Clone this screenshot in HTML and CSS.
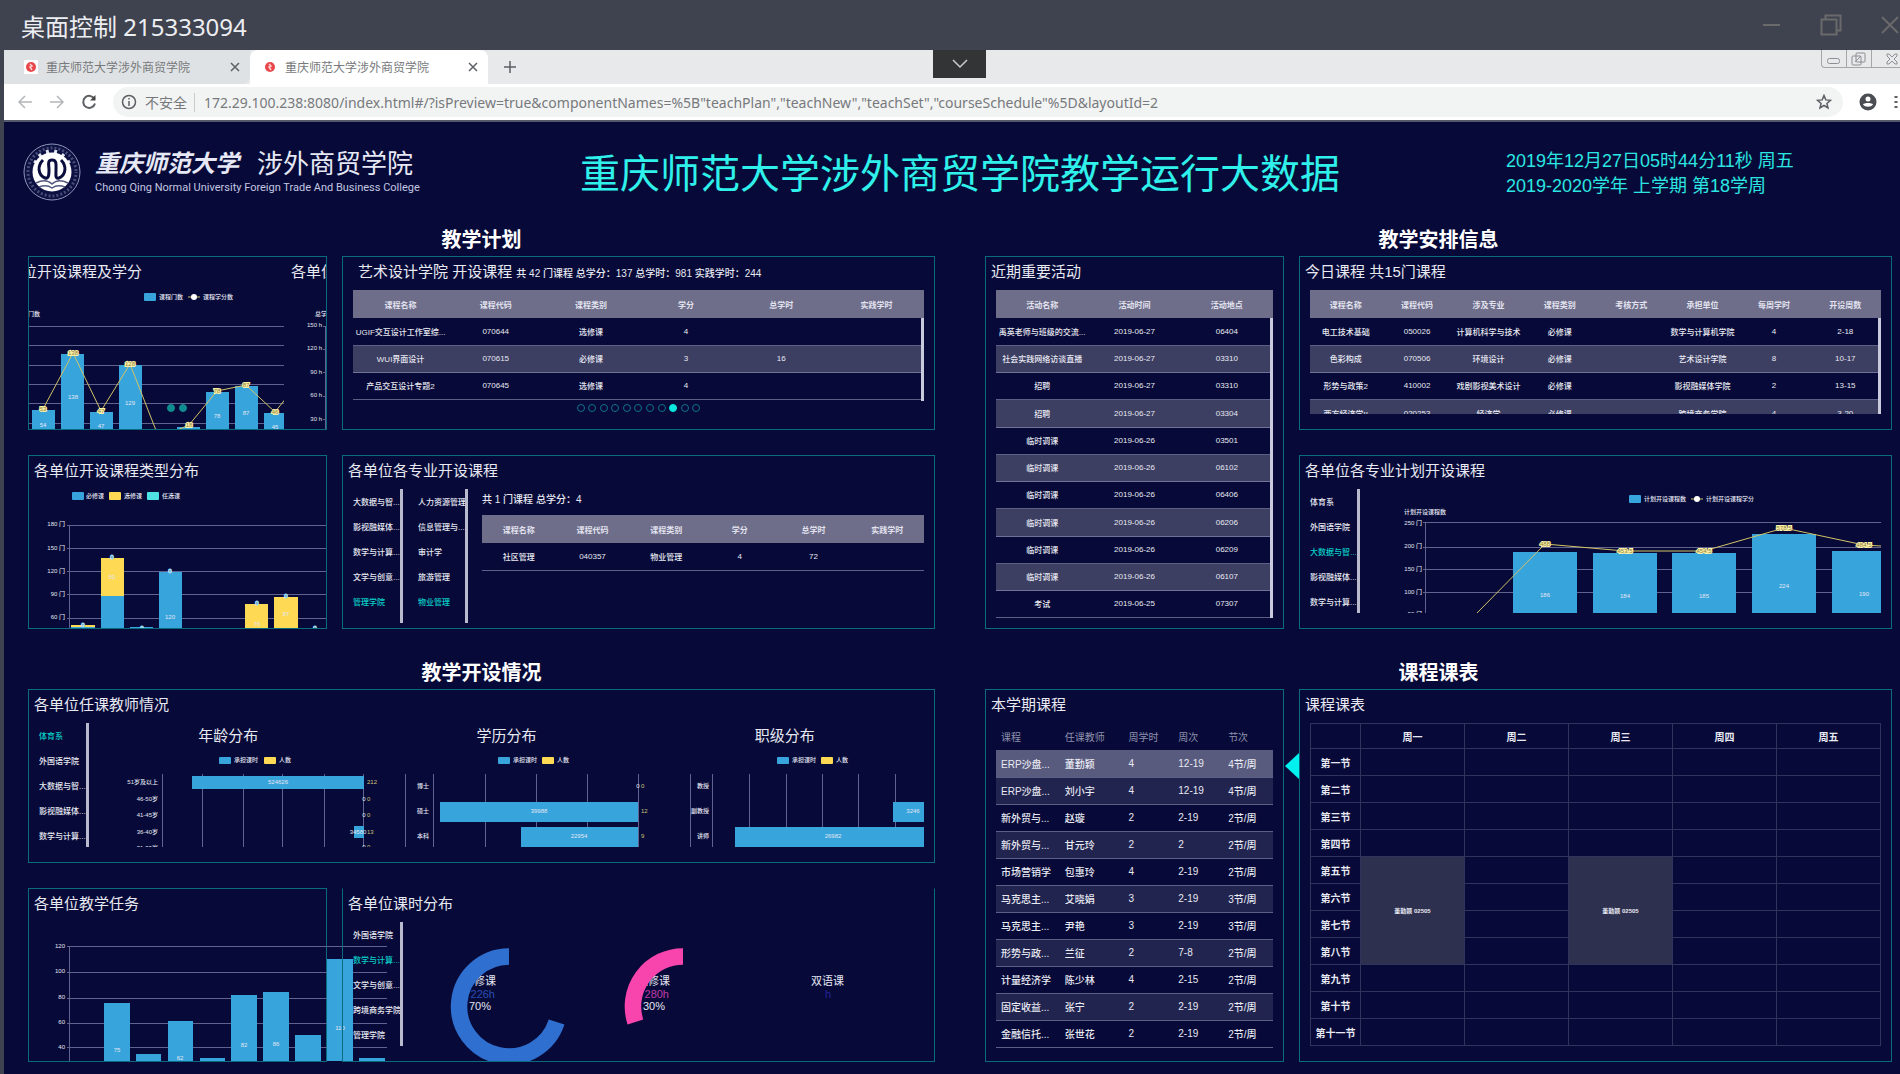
FILE: index.html
```html
<!DOCTYPE html>
<html lang="zh-CN">
<head>
<meta charset="utf-8">
<title>重庆师范大学涉外商贸学院</title>
<link rel="stylesheet" href="styles.css">
</head>
<body>
<header class="remote-bar">
  <span>桌面控制 215333094</span>
  <div class="remote-controls">
    <button type="button" aria-label="最小化"><svg width="20" height="20" viewBox="0 0 20 20"><path d="M1 10h17"/></svg></button>
    <button type="button" aria-label="还原"><svg width="22" height="22" viewBox="0 0 22 22"><path d="M1.500 5.500h15v15h-15zM5.500 5.500v-4h15v15h-4"/></svg></button>
    <button type="button" aria-label="关闭"><svg width="20" height="20" viewBox="0 0 20 20"><path d="M2 2l16 16M18 2L2 18"/></svg></button>
  </div>
</header>

<div class="browser">
  <div class="tabs">
    <div class="tab">
      <svg class="favicon" width="14" height="14" viewBox="0 0 14 14"><rect width="14" height="14" fill="#fff"/><circle cx="7" cy="7" r="5" fill="#e8474a"/><path d="M6 4l2 2-2 1 2 3" stroke="#ffd0d0" fill="none"/></svg>
      <span>重庆师范大学涉外商贸学院</span>
      <button type="button" aria-label="关闭标签页"><svg width="10" height="10" viewBox="0 0 10 10"><path d="M1 1l8 8M9 1L1 9"/></svg></button>
    </div>
    <div class="tab tab-active">
      <svg class="favicon" width="14" height="14" viewBox="0 0 14 14"><circle cx="7" cy="7" r="5" fill="#e8474a"/><path d="M6 4l2 2-2 1 2 3" stroke="#ffd0d0" fill="none"/></svg>
      <span>重庆师范大学涉外商贸学院</span>
      <button type="button" aria-label="关闭标签页"><svg width="10" height="10" viewBox="0 0 10 10"><path d="M1 1l8 8M9 1L1 9"/></svg></button>
    </div>
    <button type="button" class="new-tab" aria-label="新标签页"><svg width="14" height="14" viewBox="0 0 14 14"><path d="M7 1v12M1 7h12"/></svg></button>
    <button type="button" class="drop-handle" aria-label="展开"><svg width="18" height="10" viewBox="0 0 18 10"><path d="M2 1l7 7 7-7"/></svg></button>
    <div class="mini-controls">
      <button type="button" aria-label="最小化窗口"><svg width="24" height="16" viewBox="0 0 24 16"><rect x="5.500" y="7.500" width="12" height="5" rx="2"/></svg></button>
      <button type="button" aria-label="还原窗口"><svg width="24" height="16" viewBox="0 0 24 16"><rect x="9" y="2" width="9" height="9" rx="1"/><rect x="5" y="5" width="9" height="9" rx="1"/><path d="M8 11l6-6"/></svg></button>
      <button type="button" aria-label="关闭窗口"><svg width="28" height="16" viewBox="0 0 28 16"><path d="M15 3l2 0 3 3 3-3h2v2l-3 3 3 3v2h-2l-3-3-3 3h-2v-2l3-3-3-3z"/></svg></button>
    </div>
  </div>
  <div class="toolbar">
    <button type="button" class="nav-off" aria-label="后退"><svg width="16" height="16" viewBox="0 0 16 16"><path d="M15 8H2M8 2L2 8l6 6"/></svg></button>
    <button type="button" class="nav-off" aria-label="前进"><svg width="16" height="16" viewBox="0 0 16 16"><path d="M1 8h13M8 2l6 6-6 6"/></svg></button>
    <button type="button" aria-label="刷新"><svg width="16" height="16" viewBox="0 0 16 16"><path d="M13.500 5A6 6 0 1 0 14 9.500" stroke-width="2"/><path d="M14.500 1v5.500H9z" fill="#444" stroke="none"/></svg></button>
    <div class="address">
      <svg width="16" height="16" viewBox="0 0 16 16"><circle cx="8" cy="8" r="6.500"/><path d="M8 7v5M8 4v1.500"/></svg>
      <label for="url">不安全</label>
      <input id="url" type="text" value='172.29.100.238:8080/index.html#/?isPreview=true&amp;componentNames=%5B"teachPlan","teachNew","teachSet","courseSchedule"%5D&amp;layoutId=2'>
      <button type="button" aria-label="收藏"><svg width="16" height="16" viewBox="0 0 16 16"><path d="M8 1.500l1.800 4.400 4.700.4-3.600 3.100 1.100 4.600L8 11.500 4 14l1.100-4.600L1.500 6.300l4.700-.4z"/></svg></button>
    </div>
    <button type="button" aria-label="用户"><svg width="18" height="18" viewBox="0 0 18 18"><circle cx="9" cy="9" r="8.500" fill="#4a4d51" stroke="none"/><circle cx="9" cy="6" r="2.500" fill="#fff" stroke="none"/><path d="M4 11.500c1-2 9-2 10 0-2 3-8 3-10 0z" fill="#fff" stroke="none"/></svg></button>
    <button type="button" aria-label="菜单"><svg width="6" height="16" viewBox="0 0 6 16"><path d="M3 2v2M3 7v2M3 12v2" stroke-width="3"/></svg></button>
  </div>
</div>

<div class="dashboard">
  <header class="top">
    <div class="brand">
      <svg width="58" height="58" viewBox="0 0 58 58">
        <circle cx="29" cy="29" r="28" fill="#0d1142" stroke="#8f95b8" stroke-width="1"/>
        <path d="M11 18l3 2M16 11l3 4M24 7l1 4M33 7l-1 4M41 11l-3 4M47 18l-3 2" fill="none" stroke="#e2e4f2" stroke-width="3"/>
        <circle cx="29" cy="29" r="24" fill="none" stroke="#8f95b8" stroke-width="3" stroke-dasharray="2 2" stroke-dashoffset="1" pathLength="150" opacity=".45"/>
        <circle cx="29" cy="29" r="19.500" fill="#fff"/>
        <path d="M20 17c-6 6-5 15 2 18 4 1 4-4 4-8 0-5-2-10 3-10s4 5 4 10c0 5-1 9 3 8 7-3 8-12 2-18" fill="none" stroke="#0a0d3d" stroke-width="3"/>
        <path d="M13 40c6-3 12-3 16 1 4-4 10-4 16-1M16 44c5-2 9-2 13 1 4-3 8-3 13-1" fill="none" stroke="#53597f" stroke-width="1.500"/>
      </svg>
      <div>
        <div class="brand-cn"><span class="brush">重庆师范大学</span><span>涉外商贸学院</span></div>
        <div class="brand-en">Chong Qing Normal University Foreign Trade And Business College</div>
      </div>
    </div>
    <h1>重庆师范大学涉外商贸学院教学运行大数据</h1>
    <div class="clock">
      <div>2019年12月27日05时44分11秒 周五</div>
      <div>2019-2020学年 上学期 第18学周</div>
    </div>
  </header>

  <main>
    <section>
      <h2>教学计划</h2>
      <div class="panels">
        <article class="panel clip">
          <div class="track">
            <div class="slide">
              <h3>各单位开设课程及学分</h3>
              <svg class="chart" viewBox="-13 287 297 142" preserveAspectRatio="xMinYMin">
                <g class="bar"><rect x="144" y="293" width="12" height="8" rx="1"/></g>
                <g class="s6"><text x="159" y="297">课程门数</text><text x="203" y="297">课程学分数</text><text x="28" y="314">门数</text></g>
                <path class="line" d="M188 297h12"/><circle cx="194" cy="297" r="3" fill="#fff"/>
                <path class="grid" d="M0 326.500h288M0 345.500h288M0 365.500h288M0 384.500h288M0 403.500h288M0 423.500h288"/>
                <g class="bar"><rect x="32" y="410" width="23" height="20"/><rect x="61" y="354" width="23" height="76"/><rect x="90" y="412" width="23" height="20"/><rect x="119" y="365" width="23" height="70"/><rect x="177" y="427" width="23" height="9"/><rect x="206" y="392" width="23" height="40"/><rect x="235" y="386" width="23" height="50"/><rect x="264" y="413" width="23" height="20"/></g>
                <path class="line" d="M43 409L73 353 101 411 130 364 159 438 189 425 217 391 246 385 275 412 287 397"/>
                <g class="s6 mid"><text x="43" y="425">54</text><text x="73" y="397">138</text><text x="101" y="426">47</text><text x="130" y="403">129</text><text x="217" y="416">78</text><text x="246" y="413">87</text><text x="275" y="427">45</text></g>
                <g class="s6 mid tag"><text x="43" y="409">53</text><text x="73" y="353">138</text><text x="101" y="411">47</text><text x="130" y="364">128</text><text x="189" y="425">18</text><text x="217" y="391">78</text><text x="246" y="385">87</text><text x="275" y="412">46</text></g>
              </svg>
            </div>
            <div class="slide">
              <h3>各单位学时分布</h3>
              <svg class="chart" viewBox="286 287 297 142" preserveAspectRatio="xMinYMin">
                <text class="s6" x="315" y="314">总学时</text>
                <g class="s6 end"><text x="322" y="325">150 h</text><text x="322" y="348">120 h</text><text x="322" y="372">90 h</text><text x="322" y="395">60 h</text><text x="322" y="419">30 h</text></g>
                <path class="grid" d="M325.500 326v110M323 326.500h260M323 349.500h260M323 372.500h260M323 396.500h260M323 419.500h260"/>
              </svg>
            </div>
          </div>
          <div class="dots dots-pair"><button type="button" aria-label="第1页"></button><button type="button" aria-label="第2页"></button></div>
        </article>

        <article class="panel">
          <h3 class="h-indent">艺术设计学院 开设课程 <small>共 42 门课程 总学分：137 总学时：981 实践学时：244</small></h3>
          <div class="scroll h111">
            <table class="data">
              <thead><tr><th>课程名称</th><th>课程代码</th><th>课程类别</th><th>学分</th><th>总学时</th><th>实践学时</th></tr></thead>
              <tbody>
                <tr><td>UGIF交互设计工作室综...</td><td>070644</td><td>选修课</td><td>4</td><td></td><td></td></tr>
                <tr><td>WUI界面设计</td><td>070615</td><td>必修课</td><td>3</td><td>16</td><td></td></tr>
                <tr><td>产品交互设计专题2</td><td>070645</td><td>选修课</td><td>4</td><td></td><td></td></tr>
              </tbody>
            </table>
            <i class="bar-y below-head"></i>
          </div>
          <div class="dots dots-row">
            <button type="button" aria-label="第1页"></button><button type="button" aria-label="第2页"></button><button type="button" aria-label="第3页"></button><button type="button" aria-label="第4页"></button><button type="button" aria-label="第5页"></button><button type="button" aria-label="第6页"></button><button type="button" aria-label="第7页"></button><button type="button" aria-label="第8页"></button><button type="button" class="on" aria-label="第9页"></button><button type="button" aria-label="第10页"></button><button type="button" aria-label="第11页"></button>
          </div>
        </article>

        <article class="panel">
          <h3>各单位开设课程类型分布</h3>
          <svg class="chart" viewBox="29 486 297 142" preserveAspectRatio="xMinYMin">
            <rect x="72" y="492" width="12" height="8" rx="1" fill="#38a4dc"/><rect x="109" y="492" width="12" height="8" rx="1" fill="#fed953"/><rect x="147" y="492" width="12" height="8" rx="1" fill="#4fe0e4"/>
            <g class="s6"><text x="86" y="496">必修课</text><text x="124" y="496">选修课</text><text x="162" y="496">任选课</text></g>
            <g class="s6 end"><text x="65" y="524">180 门</text><text x="65" y="548">150 门</text><text x="65" y="571">120 门</text><text x="65" y="594">90 门</text><text x="65" y="617">60 门</text></g>
            <path class="grid" d="M69.500 525v104M67 525.500h260M67 548.500h260M67 571.500h260M67 594.500h260M67 618.500h260"/>
            <g class="bar"><rect x="101" y="596" width="23" height="33"/><rect x="159" y="572" width="23" height="57"/><rect x="71" y="627" width="24" height="3"/><rect x="130" y="627" width="23" height="3"/></g>
            <g fill="#fed953"><rect x="71" y="625" width="24" height="2"/><rect x="101" y="558" width="23" height="38"/><rect x="245" y="604" width="23" height="25"/><rect x="274" y="597" width="24" height="32"/></g>
            <g class="s6 mid glow"><text x="83" y="625">0</text><text x="112" y="557">0</text><text x="142" y="628">0</text><text x="170" y="571">0</text><text x="257" y="603">0</text><text x="286" y="596">0</text><text x="315" y="628">0</text></g>
            <g class="s6 mid"><text x="112" y="577">50</text><text x="170" y="617">120</text><text x="257" y="624">76</text><text x="286" y="614">87</text></g>
          </svg>
        </article>

        <article class="panel">
          <h3>各单位各专业开设课程</h3>
          <div class="split">
            <ul class="list list-tall">
              <li><button type="button">大数据与智...</button></li><li><button type="button">影视融媒体...</button></li><li><button type="button">数学与计算...</button></li><li><button type="button">文学与创意...</button></li><li><button type="button" class="on">管理学院</button></li>
            </ul>
            <ul class="list list-tall list-next">
              <li><button type="button">人力资源管理</button></li><li><button type="button">信息管理与...</button></li><li><button type="button">审计学</button></li><li><button type="button">旅游管理</button></li><li><button type="button" class="on">物业管理</button></li>
            </ul>
            <div class="grow">
              <p>共 1 门课程 总学分：4</p>
              <table class="data">
                <thead><tr><th>课程名称</th><th>课程代码</th><th>课程类别</th><th>学分</th><th>总学时</th><th>实践学时</th></tr></thead>
                <tbody><tr><td>社区管理</td><td>040357</td><td>物业管理</td><td>4</td><td>72</td><td></td></tr></tbody>
              </table>
            </div>
          </div>
        </article>
      </div>
    </section>

    <section>
      <h2>教学安排信息</h2>
      <div class="panels">
        <article class="panel tall">
          <h3>近期重要活动</h3>
          <div class="scroll h328">
            <table class="data">
              <thead><tr><th>活动名称</th><th>活动时间</th><th>活动地点</th></tr></thead>
              <tbody>
                <tr><td>禹英老师与班级的交流...</td><td>2019-06-27</td><td>06404</td></tr>
                <tr><td>社会实践网络访谈直播</td><td>2019-06-27</td><td>03310</td></tr>
                <tr><td>招聘</td><td>2019-06-27</td><td>03310</td></tr>
                <tr><td>招聘</td><td>2019-06-27</td><td>03304</td></tr>
                <tr><td>临时调课</td><td>2019-06-26</td><td>03501</td></tr>
                <tr><td>临时调课</td><td>2019-06-26</td><td>06102</td></tr>
                <tr><td>临时调课</td><td>2019-06-26</td><td>06406</td></tr>
                <tr><td>临时调课</td><td>2019-06-26</td><td>06206</td></tr>
                <tr><td>临时调课</td><td>2019-06-26</td><td>06209</td></tr>
                <tr><td>临时调课</td><td>2019-06-26</td><td>06107</td></tr>
                <tr><td>考试</td><td>2019-06-25</td><td>07307</td></tr>
              </tbody>
            </table>
            <i class="bar-y below-head"></i>
          </div>
        </article>

        <article class="panel">
          <h3>今日课程 共15门课程</h3>
          <div class="scroll h124">
            <table class="data">
              <thead><tr><th>课程名称</th><th>课程代码</th><th>涉及专业</th><th>课程类别</th><th>考核方式</th><th>承担单位</th><th>每周学时</th><th>开设周数</th></tr></thead>
              <tbody>
                <tr><td>电工技术基础</td><td>050026</td><td>计算机科学与技术</td><td>必修课</td><td></td><td>数学与计算机学院</td><td>4</td><td>2-18</td></tr>
                <tr><td>色彩构成</td><td>070506</td><td>环境设计</td><td>必修课</td><td></td><td>艺术设计学院</td><td>8</td><td>10-17</td></tr>
                <tr><td>形势与政策2</td><td>410002</td><td>戏剧影视美术设计</td><td>必修课</td><td></td><td>影视融媒体学院</td><td>2</td><td>13-15</td></tr>
                <tr><td>西方经济学II</td><td>020253</td><td>经济学</td><td>必修课</td><td></td><td>跨境商务学院</td><td>4</td><td>3-20</td></tr>
              </tbody>
            </table>
            <i class="bar-y below-head"></i>
          </div>
        </article>

        <article class="panel">
          <h3>各单位各专业计划开设课程</h3>
          <div class="split">
            <ul class="list">
              <li><button type="button">体育系</button></li><li><button type="button">外国语学院</button></li><li><button type="button" class="on">大数据与智...</button></li><li><button type="button">影视融媒体...</button></li><li><button type="button">数学与计算...</button></li>
            </ul>
            <svg class="chart-side h124" viewBox="1360 489 521 124" preserveAspectRatio="xMinYMin">
              <rect x="1629" y="495" width="12" height="8" rx="1" fill="#38a4dc"/>
              <path class="line" d="M1691 499h12"/><circle cx="1697" cy="499" r="3" fill="#fff"/>
              <g class="s6"><text x="1644" y="499">计划开设课程数</text><text x="1706" y="499">计划开设课程学分</text><text x="1404" y="512">计划开设课程数</text></g>
              <g class="s6 end"><text x="1422" y="523">250 门</text><text x="1422" y="546">200 门</text><text x="1422" y="569">150 门</text><text x="1422" y="592">100 门</text><text x="1422" y="614">50 门</text></g>
              <path class="grid" d="M1425.500 522v92M1423 522.500h458M1423 547.500h458M1423 569.500h458M1423 592.500h458"/>
              <g class="bar"><rect x="1513" y="552" width="64" height="62"/><rect x="1593" y="553" width="64" height="61"/><rect x="1672" y="553" width="64" height="61"/><rect x="1752" y="534" width="64" height="80"/><rect x="1832" y="551" width="49" height="63"/></g>
              <path class="line" d="M1476 614L1545 544 1625 551 1704 551 1784 528 1864 545 1881 546"/>
              <g class="s6 mid"><text x="1545" y="595">186</text><text x="1625" y="596">184</text><text x="1704" y="596">185</text><text x="1784" y="586">224</text><text x="1864" y="594">190</text></g>
              <g class="s6 mid tag"><text x="1545" y="544">488</text><text x="1625" y="551">453.5</text><text x="1704" y="551">454.5</text><text x="1784" y="528">578.5</text><text x="1864" y="545">484.5</text></g>
            </svg>
          </div>
        </article>
      </div>
    </section>

    <section>
      <h2>教学开设情况</h2>
      <div class="panels">
        <article class="panel wide">
          <h3>各单位任课教师情况</h3>
          <div class="split">
            <ul class="list">
              <li><button type="button" class="on">体育系</button></li><li><button type="button">外国语学院</button></li><li><button type="button">大数据与智...</button></li><li><button type="button">影视融媒体...</button></li><li><button type="button">数学与计算...</button></li>
            </ul>
            <div class="grow-flush">
              <div class="trio"><h4>年龄分布</h4><h4>学历分布</h4><h4>职级分布</h4></div>
              <svg class="chart-side h99" viewBox="89 748 835 99" preserveAspectRatio="xMinYMin">
                <g class="bar"><rect x="219" y="757" width="12" height="7" rx="1"/><rect x="498" y="757" width="12" height="7" rx="1"/><rect x="777" y="757" width="12" height="7" rx="1"/></g>
                <g fill="#fed953"><rect x="264" y="757" width="12" height="7" rx="1"/><rect x="542" y="757" width="12" height="7" rx="1"/><rect x="821" y="757" width="12" height="7" rx="1"/></g>
                <g class="s6"><text x="234" y="760">承担课时</text><text x="279" y="760">人数</text><text x="513" y="760">承担课时</text><text x="557" y="760">人数</text><text x="792" y="760">承担课时</text><text x="836" y="760">人数</text></g>
                <path class="grid" d="M162.500 774v73M202.500 774v73M243.500 774v73M282.500 774v73M324.500 774v73M363.500 774v73M405.500 774v73M433.500 774v73M485.500 774v73M536.500 774v73M587.500 774v73M638.500 774v73M690.500 774v73M712.500 774v73M749.500 774v73M786.500 774v73M822.500 774v73M858.500 774v73M895.500 774v73"/>
                <g class="bar"><rect x="192" y="776" width="172" height="13"/><rect x="354" y="826" width="10" height="12"/><rect x="440" y="802" width="198" height="20"/><rect x="521" y="827" width="117" height="20"/><rect x="893" y="802" width="32" height="20"/><rect x="735" y="827" width="190" height="20"/></g>
                <g class="s6 end"><text x="158" y="782">51岁及以上</text><text x="158" y="799">46-50岁</text><text x="158" y="815">41-45岁</text><text x="158" y="832">36-40岁</text><text x="158" y="848">31-35岁</text></g>
                <g class="s6 end"><text x="429" y="786">博士</text><text x="429" y="811">硕士</text><text x="429" y="836">本科</text><text x="709" y="786">教授</text><text x="709" y="811">副教授</text><text x="709" y="836">讲师</text></g>
                <g class="s6 mid"><text x="278" y="782">524626</text><text x="358" y="832">34580</text><text x="539" y="811">39988</text><text x="579" y="836">22954</text><text x="913" y="811">3246</text><text x="833" y="836">26982</text></g>
                <g class="s6 mid"><text x="364" y="799">0</text><text x="364" y="815">0</text><text x="364" y="847">0</text><text x="638" y="786">0</text></g>
                <g class="s6 gold"><text x="367" y="782">212</text><text x="367" y="799">0</text><text x="367" y="815">0</text><text x="367" y="832">13</text><text x="367" y="847">0</text><text x="641" y="786">0</text><text x="641" y="811">12</text><text x="641" y="836">9</text></g>
              </svg>
            </div>
          </div>
        </article>

        <article class="panel">
          <h3>各单位教学任务</h3>
          <svg class="chart chart-over" viewBox="29 919 360 142" preserveAspectRatio="xMinYMin">
            <g class="s6 end"><text x="65" y="946">120</text><text x="65" y="971">100</text><text x="65" y="997">80</text><text x="65" y="1022">60</text><text x="65" y="1047">40</text></g>
            <path class="grid" d="M69.500 946v116M67 946.500h320M67 972.500h320M67 998.500h320M67 1023.500h320M67 1047.500h320"/>
            <g class="bar"><rect x="104" y="1003" width="26" height="60"/><rect x="136" y="1054" width="25" height="9"/><rect x="168" y="1021" width="25" height="41"/><rect x="200" y="1058" width="25" height="4"/><rect x="231" y="995" width="26" height="67"/><rect x="263" y="992" width="26" height="70"/><rect x="295" y="1035" width="26" height="30"/><rect x="327" y="959" width="26" height="103"/><rect x="359" y="1058" width="26" height="4"/></g>
            <g class="s6 mid"><text x="117" y="1050">75</text><text x="180" y="1058">62</text><text x="244" y="1045">82</text><text x="276" y="1044">86</text><text x="340" y="1028">110</text></g>
          </svg>
        </article>

        <article class="panel open-top">
          <h3>各单位课时分布</h3>
          <div class="split">
            <ul class="list">
              <li><button type="button">外国语学院</button></li><li><button type="button" class="on">数学与计算...</button></li><li><button type="button">文学与创意...</button></li><li><button type="button">跨境商务学院</button></li><li><button type="button">管理学院</button></li>
            </ul>
            <svg class="chart-side h139" viewBox="403 922 521 139" preserveAspectRatio="xMinYMin">
              <g class="s11"><text x="463" y="981">必修课</text><text x="637" y="981">选修课</text><text x="811" y="981">双语课</text><text x="469" y="1006">70%</text><text x="643" y="1006">30%</text></g>
              <g class="s11 end"><text class="hours-a" x="495" y="994">226h</text><text class="hours-b" x="669" y="994">280h</text><text class="hours-c" x="831" y="994">h</text></g>
              <path d="M509 956.500A50 50 0 1 0 556.600 1022" fill="none" stroke="#2f6fcf" stroke-width="16.500"/>
              <path d="M683 956.500A50 50 0 0 0 635.400 1022" fill="none" stroke="#f845ad" stroke-width="16.500"/>
            </svg>
          </div>
        </article>
      </div>
    </section>

    <section>
      <h2>课程课表</h2>
      <div class="panels">
        <article class="panel tall">
          <h3>本学期课程</h3>
          <div class="scroll">
            <table class="courses">
              <thead><tr><th>课程</th><th>任课教师</th><th>周学时</th><th>周次</th><th>节次</th></tr></thead>
              <tbody>
                <tr class="picked"><td>ERP沙盘...</td><td>董勤颖</td><td>4</td><td>12-19</td><td>4节/周</td></tr>
                <tr><td>ERP沙盘...</td><td>刘小宇</td><td>4</td><td>12-19</td><td>4节/周</td></tr>
                <tr><td>新外贸与...</td><td>赵璇</td><td>2</td><td>2-19</td><td>2节/周</td></tr>
                <tr><td>新外贸与...</td><td>甘元玲</td><td>2</td><td>2</td><td>2节/周</td></tr>
                <tr><td>市场营销学</td><td>包惠玲</td><td>4</td><td>2-19</td><td>2节/周</td></tr>
                <tr><td>马克思主...</td><td>艾晓娟</td><td>3</td><td>2-19</td><td>3节/周</td></tr>
                <tr><td>马克思主...</td><td>尹艳</td><td>3</td><td>2-19</td><td>3节/周</td></tr>
                <tr><td>形势与政...</td><td>兰征</td><td>2</td><td>7-8</td><td>2节/周</td></tr>
                <tr><td>计量经济学</td><td>陈少林</td><td>4</td><td>2-15</td><td>2节/周</td></tr>
                <tr><td>固定收益...</td><td>张宁</td><td>2</td><td>2-19</td><td>2节/周</td></tr>
                <tr><td>金融信托...</td><td>张世花</td><td>2</td><td>2-19</td><td>2节/周</td></tr>
              </tbody>
            </table>
          </div>
        </article>

        <article class="panel tall">
          <i class="pointer"></i>
          <h3>课程课表</h3>
          <div class="scroll">
            <table class="week">
              <thead><tr><th class="slot"></th><th>周一</th><th>周二</th><th>周三</th><th>周四</th><th>周五</th></tr></thead>
              <tbody>
                <tr><th>第一节</th><td></td><td></td><td></td><td></td><td></td></tr>
                <tr><th>第二节</th><td></td><td></td><td></td><td></td><td></td></tr>
                <tr><th>第三节</th><td></td><td></td><td></td><td></td><td></td></tr>
                <tr><th>第四节</th><td></td><td></td><td></td><td></td><td></td></tr>
                <tr><th>第五节</th><td rowspan="4" class="busy">董勤颖 02505</td><td></td><td rowspan="4" class="busy">董勤颖 02505</td><td></td><td></td></tr>
                <tr><th>第六节</th><td></td><td></td><td></td></tr>
                <tr><th>第七节</th><td></td><td></td><td></td></tr>
                <tr><th>第八节</th><td></td><td></td><td></td></tr>
                <tr><th>第九节</th><td></td><td></td><td></td><td></td><td></td></tr>
                <tr><th>第十节</th><td></td><td></td><td></td><td></td><td></td></tr>
                <tr><th>第十一节</th><td></td><td></td><td></td><td></td><td></td></tr>
              </tbody>
            </table>
          </div>
        </article>
      </div>
    </section>
  </main>
</div>
</body>
</html>
```
FILE: styles.css
```css
* { box-sizing: border-box; }

body {
  margin: 0;
  background: #3f424f;
  color: #e8e9f2;
  font-family: "Liberation Sans", "Noto Sans CJK SC", sans-serif;
}

h1, h2, h3, h4, p, ul { margin: 0; padding: 0; }
ul { list-style: none; }
button { border: 0; padding: 0; background: none; color: inherit; font: inherit; display: block; }
svg { display: block; }

/* Remote-control window bar */
.remote-bar {
  height: 50px;
  padding-left: 21px;
  display: flex;
  align-items: center;
  justify-content: space-between;
  overflow: hidden;
  background: #3f424f;
  color: #eceef2;
  font: 24px "Noto Sans", "Noto Sans CJK SC", sans-serif;
}
.remote-controls { display: flex; align-items: center; gap: 38px; }
.remote-controls svg { fill: none; stroke: #6a6a6c; stroke-width: 2; }

/* Browser chrome */
.browser { margin-left: 4px; background: #fff; font-family: "Noto Sans", "Noto Sans CJK SC", sans-serif; }
.browser svg { fill: none; stroke: #5c5f63; stroke-width: 1.5; }
.browser .favicon { stroke: none; }
.tabs { position: relative; height: 34px; display: flex; background: #e7e9ea; }
.tab {
  width: 246px;
  padding: 0 10px 0 20px;
  display: flex;
  align-items: center;
  gap: 8px;
  border-radius: 0 0 8px 0;
  background: #dfe2e4;
  color: #77797c;
  font-size: 12px;
}
.tab span { flex: 1; }
.tab-active { width: 238px; padding-left: 13px; border-radius: 8px 8px 0 0; background: #fff; }
.new-tab { margin-left: 15px; }
.drop-handle {
  position: absolute;
  top: 0;
  left: 49%;
  width: 53px;
  height: 28px;
  display: grid;
  place-items: center;
  background: #333436;
}
.browser .drop-handle svg { stroke: #c8cacc; }
.mini-controls {
  margin-left: auto;
  height: 18px;
  display: flex;
  border: 1px solid #a4a6a8;
  border-width: 0 0 1px 1px;
  border-radius: 0 0 0 4px;
}
.browser .mini-controls svg { stroke: #8c8e91; stroke-width: 1; }
.mini-controls button + button { border-left: 1px solid #a4a6a8; }

.toolbar {
  height: 38px;
  padding: 0 1px 0 13px;
  display: flex;
  align-items: center;
  gap: 16px;
  border-bottom: 2px solid #55586a;
}
.toolbar .nav-off svg { stroke: #b4b6b9; }
.address {
  flex: 1;
  height: 30px;
  padding: 0 11px 0 8px;
  display: flex;
  align-items: center;
  border-radius: 15px;
  background: #f2f4f4;
  color: #76787b;
  font-size: 14px;
}
.address label { margin: 0 7px 0 8px; }
.address input {
  flex: 1;
  min-width: 0;
  border: 0;
  border-left: 1px solid #c8cacc;
  padding: 0 0 0 9px;
  background: none;
  color: #77797c;
  font: 14px "Noto Sans", sans-serif;
}

/* Dashboard */
.dashboard { margin-left: 4px; padding: 0 8px 12px 24px; background: #070a38; }
.top {
  height: 104px;
  display: grid;
  grid-template-columns: 1fr auto 1fr;
  align-items: center;
}
.brand { display: flex; align-items: center; gap: 14px; margin-left: -5px; padding-bottom: 5px; }
.brand-cn { display: flex; gap: 18px; align-items: center; font-size: 26px; line-height: 32px; color: #e6e8f5; }
.brush { font-size: 24px; font-weight: 700; font-style: italic; }
.brand-en { font: 11px/16px Roboto, sans-serif; color: #c3c7e0; }
h1 { color: #2ff0ea; font-size: 40px; font-weight: 400; line-height: 56px; }
.clock { padding-left: 166px; color: #2be6e2; font-size: 18px; line-height: 25px; }

main { display: grid; grid-template-columns: repeat(2, minmax(0, 1fr)); gap: 30px 50px; }
h2 { margin-bottom: 2px; color: #fff; font-size: 20px; line-height: 28px; text-align: center; }
.panels {
  display: grid;
  grid-template-columns: minmax(0, 299fr) minmax(0, 593fr);
  grid-template-rows: 174px 174px;
  gap: 25px 15px;
}
.panel { position: relative; border: 1px solid #0b6b7e; }
.tall { grid-row: span 2; }
.wide { grid-column: span 2; }
.clip { overflow: hidden; }
.open-top { border-top-color: transparent; }
h3 { height: 30px; padding: 5px; font-size: 15px; font-weight: 400; line-height: 20px; white-space: nowrap; }
.h-indent { padding-left: 15px; }
h3 small, .grow p { font-size: 10px; font-weight: 500; }
h4 { font-size: 15px; font-weight: 400; line-height: 25px; text-align: center; }

/* Sliding chart pages */
.track { display: flex; gap: 2px; margin-left: -42px; margin-right: 42px; }
.slide { flex: none; width: 100%; }
.dots { position: absolute; display: flex; justify-content: space-between; bottom: 17px; }
.dots button { width: 8px; height: 8px; border: 1px solid #10718a; border-radius: 50%; }
.dots .on { background: #08e6de; border-color: #08e6de; }
.dots-row { left: 50%; width: 124px; margin-left: -62px; }
.dots-pair { left: 138px; width: 20px; }
.dots-pair button { background: #0e8c90; border-color: #0e8c90; }

/* Charts */
.chart { width: 100%; height: 142px; }
.chart-over { width: calc(100% + 63px); }
.chart-side { flex: 1; min-width: 0; width: 100%; }
.h99 { height: 99px; }
.h139 { height: 139px; }
.h124 { height: 124px; }
.h111 { height: 111px; }
.h328 { height: 328px; }
svg text { fill: #e4e6f2; dominant-baseline: central; }
.s6 { font-size: 6px; font-weight: 500; }
.s11 { font-size: 11px; }
.mid { text-anchor: middle; }
.end { text-anchor: end; }
.bar { fill: #38a4dc; }
.grid { fill: none; stroke: #5f638e; stroke-width: 1; }
.line { fill: none; stroke: #d3c266; stroke-width: 1; }
.tag text { fill: #8a7f3c; stroke: #fff2a8; stroke-width: 2; paint-order: stroke; }
.glow text { fill: #fff; stroke: #9fd8f8; stroke-width: 1; }
.gold text { fill: #cfc27a; }
svg .hours-a { fill: #2b4db3; }
svg .hours-b { fill: #c03aa8; }
svg .hours-c { fill: #24249c; }

/* Scrolling areas and lists */
.scroll { position: relative; margin: 3px 10px 0; overflow: hidden; }
.bar-y { position: absolute; right: 0; bottom: 0; width: 3px; background: #c9cadb; }
.below-head { top: 28px; }
.split { display: flex; align-items: flex-start; margin: 3px 10px 0; }
.list { flex: none; width: 50px; height: 124px; border-right: 3px solid #b9bacd; overflow: hidden; font-size: 8px; font-weight: 500; white-space: nowrap; }
.list-tall { height: 134px; }
.list li { display: flex; align-items: center; height: 25px; }
.list .on { color: #08cfc8; }
.list-next { margin-left: 15px; }
.grow { flex: 1; margin-left: 14px; }
.grow p { height: 26px; line-height: 22px; }
.grow-flush { flex: 1; min-width: 0; }
.trio { display: grid; grid-template-columns: repeat(3, 1fr); }

/* Tables */
table { width: 100%; border-collapse: collapse; table-layout: fixed; }
th, td { padding: 0; overflow: hidden; white-space: nowrap; }
.data { font-size: 8px; font-weight: 500; text-align: center; }
.data th { height: 28px; background: #6e6e8b; font-weight: 700; color: #e2e2ee; }
.data td { height: 27px; border-bottom: 1px solid #5c5f86; }
.data tr:nth-child(even) td { background: #3c3e62; border-color: #70729a; }
.data tr:nth-child(4n) td { height: 28px; }
.courses { font-size: 10px; font-weight: 500; text-align: left; }
.courses th { height: 27px; padding-left: 5px; color: #8e90ad; font-weight: 400; }
.courses th:nth-child(-n+2) { width: 23%; }
.courses td { height: 27px; padding-left: 5px; border-bottom: 1px solid #5c5f86; }
.courses tr:nth-child(even) td { background: #21244f; }
.courses .picked td { background: #595b7e; }
.week { font-size: 10px; }
.week th, .week td { height: 27px; border: 1px solid #30335c; text-align: center; }
.week thead th { height: 25px; }
.week .slot { width: 50px; }
.week .busy { background: #2e304f; font-size: 6px; font-weight: 700; }
.pointer {
  position: absolute;
  left: -15px;
  top: 63px;
  border: 13px solid transparent;
  border-left: 0;
  border-right: 14px solid #00f0f0;
}
```
